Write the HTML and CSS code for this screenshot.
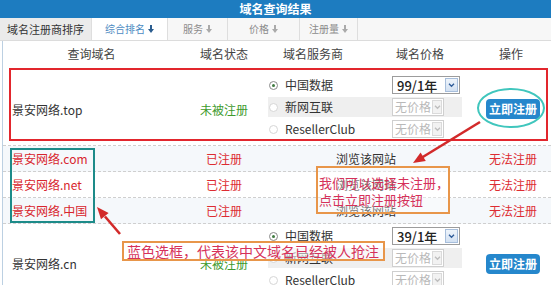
FILE: index.html
```html
<!DOCTYPE html>
<html lang="zh-CN">
<head>
<meta charset="utf-8">
<title>域名查询结果</title>
<link rel="stylesheet" href="styles.css">
</head>
<body>
<div class="page">
  <div class="title">域名查询结果</div>
  <div class="tabs">
    <div class="tab tab-first">域名注册商排序</div>
    <div class="tab tab-active w76">综合排名 <svg class="dn" viewBox="0 0 6 8"><path d="M2 0h2v4h2L3 8 0 4h2z"/></svg></div>
    <div class="tab w60">服务 <svg class="dn" viewBox="0 0 6 8"><path d="M2 0h2v4h2L3 8 0 4h2z"/></svg></div>
    <div class="tab w72">价格 <svg class="dn" viewBox="0 0 6 8"><path d="M2 0h2v4h2L3 8 0 4h2z"/></svg></div>
    <div class="tab w58">注册量 <svg class="dn" viewBox="0 0 6 8"><path d="M2 0h2v4h2L3 8 0 4h2z"/></svg></div>
  </div>

  <div class="table">
    <div class="thead">
      <div>查询域名</div>
      <div>域名状态</div>
      <div>域名服务商</div>
      <div>域名价格</div>
      <div>操作</div>
    </div>

    <div class="row row-main row-first">
      <div class="name">景安网络.top</div>
      <div class="status free">未被注册</div>
      <div class="options">
        <div class="opt">
          <div class="prov"><span class="radio on"></span>中国数据</div>
          <div class="sel"><span class="sel-text">99/1年</span><span class="sel-btn"><svg viewBox="0 0 8 6"><path d="M1 1l3 3 3-3"/></svg></span></div>
        </div>
        <div class="opt alt">
          <div class="prov"><span class="radio"></span>新网互联</div>
          <div class="sel sel-off"><span class="sel-text">无价格</span><span class="sel-btn"><svg viewBox="0 0 8 6"><path d="M1 1l3 3 3-3"/></svg></span></div>
        </div>
        <div class="opt">
          <div class="prov"><span class="radio"></span>ResellerClub</div>
          <div class="sel sel-off"><span class="sel-text">无价格</span><span class="sel-btn"><svg viewBox="0 0 8 6"><path d="M1 1l3 3 3-3"/></svg></span></div>
        </div>
      </div>
      <div class="action"><span class="btn">立即注册</span></div>
    </div>

    <div class="row row-link tint">
      <div class="name taken">景安网络.com</div>
      <div class="status red">已注册</div>
      <div class="browse">浏览该网站</div>
      <div class="action red">无法注册</div>
    </div>
    <div class="row row-link">
      <div class="name taken">景安网络.net</div>
      <div class="status red">已注册</div>
      <div class="browse">浏览该网站</div>
      <div class="action red">无法注册</div>
    </div>
    <div class="row row-link tint">
      <div class="name taken">景安网络.中国</div>
      <div class="status red">已注册</div>
      <div class="browse">浏览该网站</div>
      <div class="action red">无法注册</div>
    </div>

    <div class="row row-main row-last">
      <div class="name">景安网络.cn</div>
      <div class="status free">未被注册</div>
      <div class="options">
        <div class="opt">
          <div class="prov"><span class="radio on"></span>中国数据</div>
          <div class="sel"><span class="sel-text">39/1年</span><span class="sel-btn"><svg viewBox="0 0 8 6"><path d="M1 1l3 3 3-3"/></svg></span></div>
        </div>
        <div class="opt alt">
          <div class="prov"><span class="radio"></span>新网互联</div>
          <div class="sel sel-off"><span class="sel-text">无价格</span><span class="sel-btn"><svg viewBox="0 0 8 6"><path d="M1 1l3 3 3-3"/></svg></span></div>
        </div>
        <div class="opt">
          <div class="prov"><span class="radio"></span>ResellerClub</div>
          <div class="sel sel-off"><span class="sel-text">无价格</span><span class="sel-btn"><svg viewBox="0 0 8 6"><path d="M1 1l3 3 3-3"/></svg></span></div>
        </div>
      </div>
      <div class="action"><span class="btn">立即注册</span></div>
    </div>
  </div>

  <div class="mark mark-red"></div>
  <div class="mark mark-ellipse"></div>
  <div class="mark mark-teal"></div>
  <div class="note note-1">我们可以选择未注册，<br>点击立即注册按钮</div>
  <div class="note note-2">蓝色选框，代表该中文域名已经被人抢注</div>
  <svg class="arrows" viewBox="0 0 551 285">
    <line x1="480" y1="122" x2="422" y2="157.5" />
    <polygon points="413,163 425.8,161 420.6,152.4" />
    <line x1="120" y1="234" x2="105" y2="216.5" />
    <polygon points="97,207 108.6,212.9 101,219.3" />
  </svg>
</div>
</body>
</html>
```
FILE: styles.css
```css
* { box-sizing: border-box; }
html, body { margin: 0; padding: 0; background: #fff; }
body { font-family: "Noto Sans CJK SC", "Noto Sans", sans-serif; }

.page {
  position: relative;
  width: 551px;
  height: 285px;
  overflow: hidden;
  background: #fff;
}

.title {
  height: 18px;
  line-height: 18px;
  background: #1d7cc0;
  color: #fff;
  font-size: 12px;
  font-weight: bold;
  text-align: center;
}

.tabs {
  display: flex;
  height: 23px;
  background: #f7f7f7;
  border-bottom: 1px solid #dcdcdc;
}
.tab {
  display: flex;
  align-items: center;
  justify-content: center;
  gap: 3px;
  border-right: 1px solid #dedede;
  font-size: 10px;
  color: #8c8c8c;
  line-height: 1;
  white-space: nowrap;
}
.tab-first { width: 92px; background: #ebebeb; color: #333; font-size: 11px; }
.tab-active { background: #fff; color: #4d8bc2; }
.w76 { width: 76px; }
.w60 { width: 60px; }
.w72 { width: 72px; }
.w58 { width: 58px; }
.dn { width: 6px; height: 8px; fill: #aaa; }
.tab-active .dn { fill: #2b5d8f; }

.table {
  margin-left: 2px;
  width: 549px;
  border-left: 1px solid #bcd0e2;
}

.thead {
  display: grid;
  grid-template-columns: 177px 88px 90px 124px 58px;
  height: 26px;
  align-items: center;
  text-align: center;
  font-size: 12px;
  color: #444;
  line-height: 1;
}

.row {
  display: grid;
  grid-template-columns: 177px 88px 214px 58px;
  border-bottom: 1px dashed #cfcfcf;
  font-size: 12px;
  line-height: 1;
  white-space: nowrap;
}
.row-first { height: 79px; padding-top: 6px; }
.row-last { height: 80px; border-bottom: none; }
.row-link { height: 26px; align-items: center; }
.tint { background: #f5f8fb; }

.name { padding-left: 9px; color: #333; align-self: center; }
.row-first .name, .row-first .status { padding-top: 2px; }
.name.taken { color: #d8252d; }
.status { text-align: center; align-self: center; }
.free { color: #3d9a2c; }
.red { color: #dd2c32; }
.browse { text-align: center; padding-right: 18px; color: #333; }
.action { text-align: center; align-self: center; display: flex; justify-content: center; padding-left: 4px; }

.options { align-self: start; }
.opt {
  display: flex;
  align-items: center;
  width: 194px;
  height: 20px;
  margin: 2px 0;
}
.opt.alt { background: #efefef; }
.prov {
  width: 124px;
  display: flex;
  align-items: center;
  gap: 7px;
  padding-left: 1px;
  color: #333;
  font-size: 12px;
}
.radio {
  width: 9px;
  height: 9px;
  border-radius: 50%;
  border: 1px solid #d6d6d6;
  background: #fff;
  flex: none;
  display: flex;
  align-items: center;
  justify-content: center;
}
.radio.on { border-color: #8a8a8a; }
.radio.on::after {
  content: "";
  width: 3px;
  height: 3px;
  border-radius: 50%;
  background: #3f7a3f;
}

.sel {
  width: 68px;
  height: 18px;
  border: 1px solid #9c9c9c;
  background: #fff;
  display: flex;
  align-items: center;
  justify-content: space-between;
  padding-left: 4px;
  padding-right: 1px;
  flex: none;
}
.sel-text { font-size: 13px; color: #222; font-weight: 500; white-space: nowrap; }
.sel-btn {
  width: 13px;
  height: 14px;
  background: linear-gradient(#eef4fb, #d3e1f2);
  border: 1px solid #a7bedb;
  display: flex;
  align-items: center;
  justify-content: center;
  flex: none;
}
.sel-btn svg { width: 7px; height: 5px; fill: none; stroke: #2e5c9a; stroke-width: 1.6; }
.sel-off { width: 52px; border-color: #cfcfcf; padding-left: 2px; }
.sel-off .sel-text { color: #b9b9b9; font-size: 12px; font-weight: normal; }
.sel-off .sel-btn { background: #f2f2f2; border-color: #dadada; width: 10px; }
.sel-off .sel-btn svg { stroke: #bdbdbd; }

.btn {
  width: 57px;
  height: 20px;
  border-radius: 4px;
  background: #2587cc;
  color: #fff;
  font-weight: bold;
  font-size: 12px;
  display: flex;
  align-items: center;
  justify-content: center;
}

/* annotation overlays */
.mark { position: absolute; }
.mark-red {
  left: 9px; top: 68px; width: 539px; height: 73px;
  border: 2px solid #e2262d;
}
.mark-ellipse {
  left: 477px; top: 88px; width: 68px; height: 40px;
  border: 2px solid #40c6bd;
  border-radius: 50%;
}
.mark-teal {
  left: 10px; top: 148px; width: 85px; height: 75px;
  border: 2px solid #1d8b89;
}
.note {
  position: absolute;
  border: 2px solid #e8964a;
  color: #d6315a;
  white-space: nowrap;
}
.note-1 {
  left: 316px; top: 166px; width: 134px; height: 48px;
  background: rgba(255, 255, 255, 0.35);
  font-size: 13px;
  line-height: 17px;
  padding: 6px 0 0 1px;
}
.note-2 {
  left: 122px; top: 241px; width: 263px; height: 20px;
  background: rgba(255, 255, 255, 0.55);
  font-size: 14px;
  line-height: 16px;
  padding-left: 3px;
}
.arrows {
  position: absolute;
  left: 0; top: 0;
  width: 551px; height: 285px;
  pointer-events: none;
}
.arrows line { stroke: #d22a2a; stroke-width: 2.6; }
.arrows polygon { fill: #d22a2a; }
```
